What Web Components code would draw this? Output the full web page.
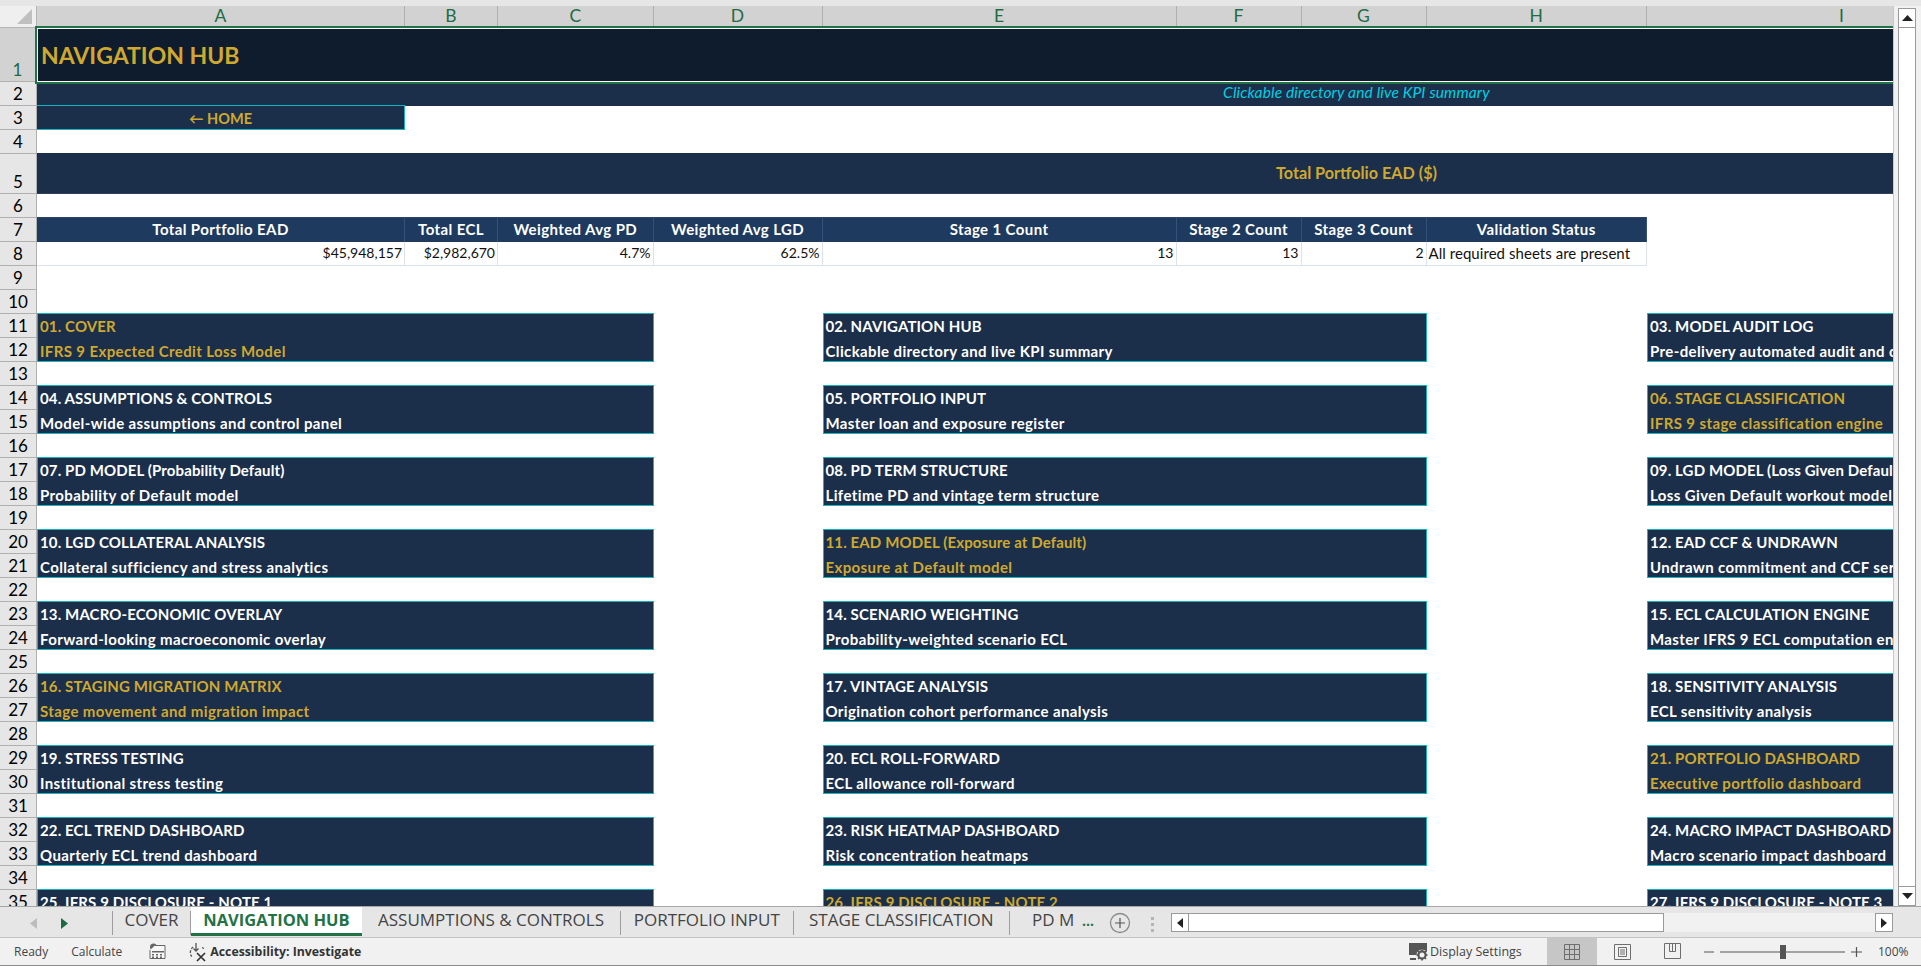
<!DOCTYPE html>
<html>
<head>
<meta charset="utf-8">
<title>Navigation Hub</title>
<style>
  html, body { margin: 0; padding: 0; background: #fff; overflow: hidden; }
</style>
</head>
<body>
<xl-app></xl-app>
<script>
const NAVY = '#1b2f4b';
const GOLD = '#cfa92f';
const TEAL = '#14b5c0';

const CARDS = [
  ['01. COVER', 'IFRS 9 Expected Credit Loss Model', 1],
  ['02. NAVIGATION HUB', 'Clickable directory and live KPI summary'],
  ['03. MODEL AUDIT LOG', 'Pre-delivery automated audit and compliance log'],
  ['04. ASSUMPTIONS & CONTROLS', 'Model-wide assumptions and control panel'],
  ['05. PORTFOLIO INPUT', 'Master loan and exposure register'],
  ['06. STAGE CLASSIFICATION', 'IFRS 9 stage classification engine', 1],
  ['07. PD MODEL (Probability Default)', 'Probability of Default model'],
  ['08. PD TERM STRUCTURE', 'Lifetime PD and vintage term structure'],
  ['09. LGD MODEL (Loss Given Default)', 'Loss Given Default workout model'],
  ['10. LGD COLLATERAL ANALYSIS', 'Collateral sufficiency and stress analytics'],
  ['11. EAD MODEL (Exposure at Default)', 'Exposure at Default model', 1],
  ['12. EAD CCF & UNDRAWN', 'Undrawn commitment and CCF series'],
  ['13. MACRO-ECONOMIC OVERLAY', 'Forward-looking macroeconomic overlay'],
  ['14. SCENARIO WEIGHTING', 'Probability-weighted scenario ECL'],
  ['15. ECL CALCULATION ENGINE', 'Master IFRS 9 ECL computation engine'],
  ['16. STAGING MIGRATION MATRIX', 'Stage movement and migration impact', 1],
  ['17. VINTAGE ANALYSIS', 'Origination cohort performance analysis'],
  ['18. SENSITIVITY ANALYSIS', 'ECL sensitivity analysis'],
  ['19. STRESS TESTING', 'Institutional stress testing'],
  ['20. ECL ROLL-FORWARD', 'ECL allowance roll-forward'],
  ['21. PORTFOLIO DASHBOARD', 'Executive portfolio dashboard', 1],
  ['22. ECL TREND DASHBOARD', 'Quarterly ECL trend dashboard'],
  ['23. RISK HEATMAP DASHBOARD', 'Risk concentration heatmaps'],
  ['24. MACRO IMPACT DASHBOARD', 'Macro scenario impact dashboard'],
  ['25. IFRS 9 DISCLOSURE - NOTE 1', ''],
  ['26. IFRS 9 DISCLOSURE - NOTE 2', '', 1],
  ['27. IFRS 9 DISCLOSURE - NOTE 3', '']
];

const KPI = [
  ['Total Portfolio EAD', '$45,948,157'],
  ['Total ECL', '$2,982,670'],
  ['Weighted Avg PD', '4.7%'],
  ['Weighted Avg LGD', '62.5%'],
  ['Stage 1 Count', '13'],
  ['Stage 2 Count', '13'],
  ['Stage 3 Count', '2'],
  ['Validation Status', 'All required sheets are present']
];

class XlCard extends HTMLElement {
  constructor() {
    super();
    this.attachShadow({ mode: 'open' });
    this.shadowRoot.innerHTML = `
      <style>
        :host {
          display: grid;
          grid-template-rows: 24px 23px;
          box-sizing: border-box;
          margin-top: -1px;
          height: 49px;
          background: ${NAVY};
          border: 1px solid ${TEAL};
          color: #fff;
          font: 700 15px Lato, "Liberation Sans", sans-serif;
          overflow: hidden;
          white-space: nowrap;
        }
        :host([gold]) { color: ${GOLD}; }
        div { padding-left: 2px; }
        .top { line-height: 25px; letter-spacing: .12px; }
        .sub { line-height: 26px; letter-spacing: .38px; }
      </style>
      <div class="top"><slot name="title"></slot></div>
      <div class="sub"><slot name="sub"></slot></div>
    `;
  }
}
customElements.define('xl-card', XlCard);

class XlSheet extends HTMLElement {
  constructor() {
    super();
    this.attachShadow({ mode: 'open' });
    const rows = [54, 24, 24, 24, 40];
    for (let i = 6; i <= 35; i++) rows.push(24);

    let head = '<div class="corner"><svg width="15" height="15" viewBox="0 0 15 15"><path d="M15 0V15H0z" fill="#bfbfbf"/></svg></div>';
    'ABCDEFGHI'.split('').forEach((c, i) => {
      head += `<div class="col" style="grid-column:${i + 2}">${c}</div>`;
    });
    rows.forEach((h, i) => {
      head += `<div class="num ${i === 0 ? 'on' : ''}" style="grid-row:${i + 2}">${i + 1}</div>`;
    });

    let kpi = '';
    KPI.forEach((k, i) => {
      kpi += `<div class="kh" style="grid-column:${i + 2};grid-row:8">${k[0]}</div>`;
      kpi += `<div class="kv ${i === 7 ? 'txt' : ''}" style="grid-column:${i + 2};grid-row:9">${k[1]}</div>`;
    });

    const colPos = ['2 / 5', '6 / 9', '10 / 12'];
    let cards = '';
    CARDS.forEach((c, i) => {
      const row = 11 + Math.floor(i / 3) * 3;
      cards += `<xl-card ${c[2] ? 'gold' : ''} style="grid-column:${colPos[i % 3]};grid-row:${row + 1} / ${row + 3}">
        <span slot="title">${c[0].replace('&', '&amp;')}</span><span slot="sub">${c[1]}</span></xl-card>`;
    });

    this.shadowRoot.innerHTML = `
      <style>
        :host {
          display: block;
          width: 1893px;
          height: 900px;
          overflow: hidden;
          background: #fff;
          font: 400 14px Lato, "Liberation Sans", sans-serif;
        }
        .grid {
          display: grid;
          grid-template-columns: 37px 368px 93px 155.5px 169px 354px 125px 125px 220.500px 390px 639px;
          grid-template-rows: 22px ${rows.map(r => r + 'px').join(' ')};
        }
        .corner { grid-column: 1; grid-row: 1; background: #efefef; border-bottom: 1px solid #b5b5b5; border-right: 1px solid #b5b5b5; box-sizing: border-box; display: flex; justify-content: flex-end; align-items: flex-end; padding: 0 4px 3px 0; }
        .col {
          grid-row: 1;
          background: #d2d2d2;
          border-right: 1px solid #b0b0b0;
          border-bottom: 2px solid #217346;
          box-sizing: border-box;
          color: #1f6b45;
          font-size: 17.5px;
          line-height: 20px;
          text-align: center;
        }
        .num {
          grid-column: 1;
          background: #e6e6e6;
          border-bottom: 1px solid #b0b0b0;
          border-right: 1px solid #b0b0b0;
          box-sizing: border-box;
          color: #000;
          font-size: 17px;
          line-height: 22px;
          display: flex;
          align-items: flex-end;
          justify-content: center;
        }
        .num.on { background: #d2d2d2; color: #1f6b45; border-right: 2px solid #217346; }
        .band { grid-column: 2 / 12; display: flex; align-items: center; justify-content: center; background: ${NAVY}; }
        .title {
          grid-column: 2 / 12; grid-row: 2;
          background: #0f1c2d;
          border: 1px solid #fff;
          outline: 2px solid #217346;
          box-sizing: border-box;
          color: ${GOLD};
          font-weight: 700;
          font-size: 23px;
          display: flex; align-items: center;
          padding-left: 3px;
          z-index: 2;
        }
        .sub { grid-row: 3; color: #00cfe3; font-style: italic; font-size: 15.5px; letter-spacing: .15px; padding-bottom: 4px; box-sizing: border-box; }
        .home {
          grid-column: 2; grid-row: 4;
          margin-top: -1px;
          background: ${NAVY};
          border: 1px solid ${TEAL};
          border-left: 0;
          color: ${GOLD};
          font-weight: 700;
          font-size: 14.5px;
          display: flex; align-items: flex-end; justify-content: center;
          line-height: 20px;
        }
        .total { grid-row: 6; margin-top: -1px; color: ${GOLD}; font-weight: 700; font-size: 16.2px; border-bottom: 1px solid #2d405c; padding-bottom: 2px; }
        .kh {
          margin-top: -1px;
          background: #1e3a5f;
          color: #fff;
          font-weight: 700;
          font-size: 15px;
          letter-spacing: .39px;
          white-space: nowrap;
          text-align: center;
          line-height: 23px;
          border-right: 1px solid #33517a;
          border-top: 1px solid #2c4464;
          box-sizing: border-box;
        }
        .kv {
          text-align: right;
          line-height: 22px;
          padding-right: 2px;
          border-right: 1px solid #dde3ec;
          border-bottom: 1px solid #dde3ec;
          color: #111;
          box-sizing: border-box;
        }
        .kv.txt { text-align: left; padding-left: 2px; font-size: 15px; letter-spacing: .05px; white-space: nowrap; }
      </style>
      <div class="grid">
        ${head}
        <div class="title">NAVIGATION HUB</div>
        <div class="band sub">Clickable directory and live KPI summary</div>
        <div class="home">← HOME</div>
        <div class="band total">Total Portfolio EAD ($)</div>
        ${kpi}
        ${cards}
      </div>
    `;
  }
}
customElements.define('xl-sheet', XlSheet);

class XlVscroll extends HTMLElement {
  constructor() {
    super();
    this.attachShadow({ mode: 'open' });
    this.shadowRoot.innerHTML = `
      <style>
        :host {
          display: flex;
          flex-direction: column;
          width: 28px;
          height: 900px;
          box-sizing: border-box;
          padding: 2px 5px 0 4px;
          background: #f1f1f1;
          border-left: 1px solid #c8c8c8;
        }
        div { border: 1px solid #9a9a9a; background: #fff; box-sizing: border-box; display: flex; align-items: center; justify-content: center; }
        .btn { height: 20px; flex: none; }
        .thumb { flex: 1; border-top: 0; border-bottom: 0; }
      </style>
      <div class="btn"><svg width="11" height="6"><path d="M5.5 0L11 6H0z" fill="#222"/></svg></div>
      <div class="thumb"></div>
      <div class="btn"><svg width="11" height="6"><path d="M0 0H11L5.5 6z" fill="#222"/></svg></div>
    `;
  }
}
customElements.define('xl-vscroll', XlVscroll);

class XlTab extends HTMLElement {
  constructor() {
    super();
    this.attachShadow({ mode: 'open' });
    this.shadowRoot.innerHTML = `
      <style>
        :host {
          display: flex;
          align-items: flex-start;
          justify-content: center;
          box-sizing: border-box;
          color: #444;
          white-space: nowrap;
          font: 400 17px "Open Sans", "Liberation Sans", sans-serif;
          border-right: 1px solid #9e9e9e;
          margin-top: 4px;
          height: 24px;
          line-height: 17px;
        }
        :host([active]) {
          margin-top: 0;
          height: 29px;
          padding-top: 4px;
          background: #fff;
          color: #217346;
          font-size: 16.5px;
          font-weight: 700;
          border-right: 0;
          border-bottom: 3px solid #217346;
        }
        :host([plain]) { border-right: 0; }
      </style>
      <slot></slot>
    `;
  }
}
customElements.define('xl-tab', XlTab);

class XlTabs extends HTMLElement {
  constructor() {
    super();
    this.attachShadow({ mode: 'open' });
    this.shadowRoot.innerHTML = `
      <style>
        :host {
          display: flex;
          height: 32px;
          box-sizing: border-box;
          background: #e6e6e6;
          border-top: 1px solid #a6a6a6;
          border-bottom: 1px solid #c4c4c4;
          align-items: flex-start;
        }
        .nav { width: 113px; height: 24px; margin-top: 4px; box-sizing: border-box; border-right: 1px solid #9e9e9e; display: flex; align-items: center; padding-left: 30px; gap: 24px; }
        .more { color: #217346; font: 700 14px "Open Sans", sans-serif; width: 25px; line-height: 17px; margin-top: 5px; }
        .plus { width: 40px; height: 24px; margin-top: 3px; }
        .dots { width: 18px; margin-top: 9px; height: 16px; }
        .hs { flex: 1; margin: 6px 0 0 6px; height: 19px; display: flex; background: #f1f1f1; }
        .hs > div { box-sizing: border-box; border: 1px solid #9a9a9a; background: #fff; display: flex; align-items: center; justify-content: center; }
        .b { width: 18px; flex: none; }
        .t { width: 475px; flex: none; border-left: 0 !important; border-top: 1px solid #9a9a9a; }
        .fill { flex: 1; border: 0 !important; background: #f1f1f1 !important; }
        .tail { width: 28px; flex: none; }
      </style>
      <div class="nav">
        <svg width="7" height="11"><path d="M7 0V11L0 5.5z" fill="#bcbcbc"/></svg>
        <svg width="7" height="11"><path d="M0 0V11L7 5.5z" fill="#1c6b43"/></svg>
      </div>
      <xl-tab style="width:78px">COVER</xl-tab>
      <xl-tab active style="width:171px">NAVIGATION HUB</xl-tab>
      <xl-tab style="width:259px">ASSUMPTIONS &amp; CONTROLS</xl-tab>
      <xl-tab style="width:172.5px">PORTFOLIO INPUT</xl-tab>
      <xl-tab style="width:216.5px">STAGE CLASSIFICATION</xl-tab>
      <xl-tab plain style="width:72px;padding-left:22px;justify-content:flex-start">PD M</xl-tab>
      <div class="more">...</div>
      <svg class="plus" viewBox="0 0 40 24"><circle cx="13" cy="13" r="9.5" fill="none" stroke="#8a8a8a" stroke-width="1.3"/><path d="M13 8v10M8 13h10" stroke="#555" stroke-width="1.2"/></svg>
      <svg class="dots" viewBox="0 0 18 16"><path d="M4 1h3v3H4zM4 7h3v3H4zM4 13h3v3H4z" fill="#b5b5b5"/></svg>
      <div class="hs">
        <div class="b"><svg width="6" height="10"><path d="M6 0V10L0 5z" fill="#222"/></svg></div>
        <div class="t"></div>
        <div class="fill"></div>
        <div class="b"><svg width="6" height="10"><path d="M0 0V10L6 5z" fill="#222"/></svg></div>
      </div>
      <div class="tail"></div>
    `;
  }
}
customElements.define('xl-tabs', XlTabs);

class XlStatus extends HTMLElement {
  constructor() {
    super();
    this.attachShadow({ mode: 'open' });
    this.shadowRoot.innerHTML = `
      <style>
        :host {
          display: flex;
          align-items: center;
          height: 28px;
          box-sizing: border-box;
          background: #f1f1f1;
          border-bottom: 1px solid #8c8c8c;
          color: #444;
          font: 400 12px "Open Sans", "Liberation Sans", sans-serif;
          white-space: nowrap;
        }
        span { display: block; }
        b { color: #333; font-weight: 700; font-size: 12.3px; }
        svg { display: block; flex: none; }
        .view { width: 50px; height: 27px; display: flex; align-items: center; justify-content: center; flex: none; }
        .view.on { background: #c6c6c6; }
        .grow { flex: 1; }
      </style>
      <span style="margin-left:14px">Ready</span>
      <span style="margin-left:23px">Calculate</span>
      <svg style="margin-left:27px" width="17" height="17" viewBox="0 0 17 17"><circle cx="4.5" cy="4" r="3.5" fill="#666"/><path d="M6 2.5h10v13H1V7" fill="#f7f7f7" stroke="#666"/><path d="M3 8h12v1.5H3zM3 11h2v1.5H3zM7 11h2v1.5H7zM11 11h2v1.5h-2zM3 13.5h2V15H3zM7 13.5h2V15H7zM11 13.5h2V15h-2z" fill="#666"/></svg>
      <svg style="margin-left:21px" width="20" height="20" viewBox="0 0 20 20" fill="none" stroke="#555" stroke-width="1.3"><path d="M6 5a7 7 0 0 0-1 10" stroke-dasharray="2.5 1.5"/><path d="M9 1v8M6.5 6.5L9 9l2.5-2.5"/><path d="M15 5.5l2 1"/><path d="M10 11l8 8M18 11l-8 8" stroke="#333" stroke-width="1.7"/></svg>
      <b style="margin-left:3px">Accessibility: Investigate</b>
      <div class="grow"></div>
      <svg width="20" height="19" viewBox="0 0 20 19"><path d="M1 1h18v12H1z" fill="#555"/><path d="M2 16h6v2H2z" fill="#555"/><circle cx="14" cy="13" r="5.5" fill="#f1f1f1"/><circle cx="14" cy="13" r="3.6" fill="none" stroke="#555" stroke-width="2.2"/><path d="M14 7.5v2M14 16.5v2M8.5 13h2M17.5 13h2M10 9l1.5 1.5M16.5 15.5L18 17M18 9l-1.5 1.5M11.5 15.5L10 17" stroke="#555" stroke-width="1.6"/></svg>
      <span style="margin-left:2px;width:117px;font-size:12.5px">Display Settings</span>
      <div class="view on"><svg width="16" height="16" viewBox="0 0 16 16" fill="none" stroke="#6e6e6e"><path d="M.5.5h15v15H.5zM5.5.5v15M10.5.5v15M.5 5.5h15M.5 10.5h15"/></svg></div>
      <div class="view"><svg width="17" height="16" viewBox="0 0 17 16" fill="none" stroke="#6e6e6e"><path d="M.5.5h16v15H.5zM4.5 3.5h8v9h-8zM6 6h5M6 8h5M6 10h5"/></svg></div>
      <div class="view"><svg width="17" height="17" viewBox="0 0 17 17" fill="none" stroke="#6e6e6e"><path d="M.5.5h16v15H.5zM5.5.5v8h6v-8M8.5.5v8"/></svg></div>
      <svg style="margin-left:7px" width="158" height="16" viewBox="0 0 158 16"><path d="M0 8h10M16 8h125M147 8h11M152.500 3v10" stroke="#555" stroke-width="1.2" fill="none"/><path d="M76 1h6v14h-6z" fill="#555"/></svg>
      <span style="margin-left:16px;width:36px">100%</span>
      <span style="width:7px"></span>
    `;
  }
}
customElements.define('xl-status', XlStatus);

class XlApp extends HTMLElement {
  constructor() {
    super();
    this.attachShadow({ mode: 'open' });
    this.shadowRoot.innerHTML = `
      <style>
        :host { display: flex; flex-direction: column; width: 1921px; height: 966px; background: #e6e6e6; overflow: hidden; }
        .strip { height: 6px; flex: none; background: #e6e6e6; }
        .main { display: flex; height: 900px; flex: none; }
      </style>
      <div class="strip"></div>
      <div class="main"><xl-sheet></xl-sheet><xl-vscroll></xl-vscroll></div>
      <xl-tabs></xl-tabs>
      <xl-status></xl-status>
    `;
  }
}
customElements.define('xl-app', XlApp);
</script>
</body>
</html>
